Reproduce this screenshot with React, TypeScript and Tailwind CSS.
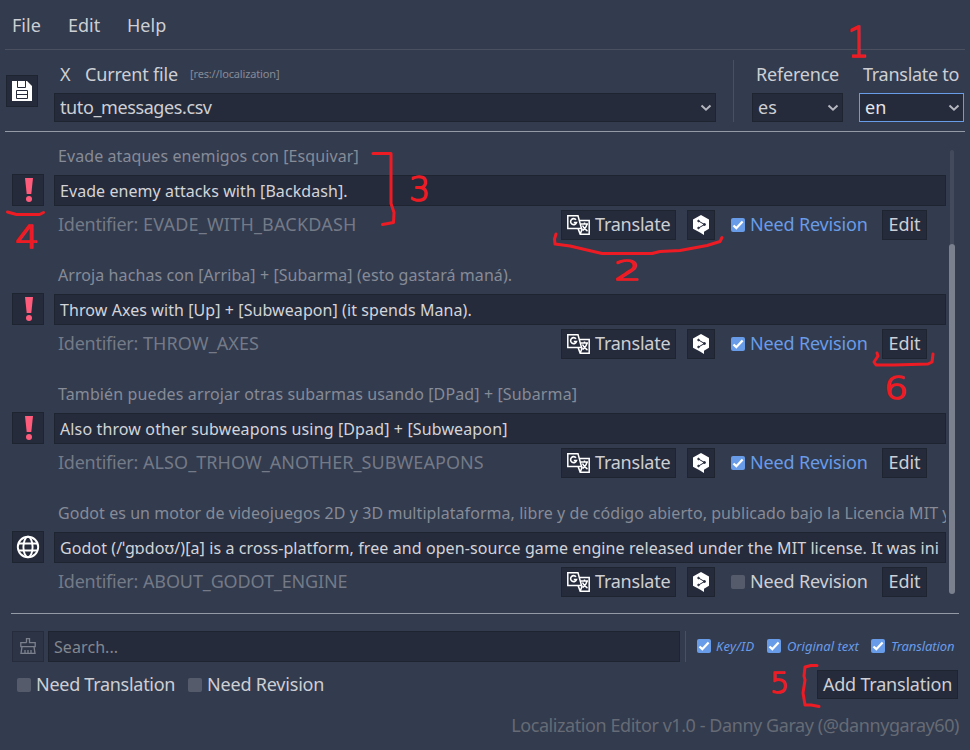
import React from "react";

const UI = "font-['Noto_Sans',sans-serif] text-[18px] leading-[24px] whitespace-nowrap";

function Chevron() {
  return (
    <svg width="12" height="8" viewBox="0 0 12 8" fill="none" className="shrink-0">
      <path d="M1.500 1.500 6 5.700l4.500-4.200" stroke="#b4b7bf" strokeWidth="2" />
    </svg>
  );
}

function Check({ on }: { on?: boolean }) {
  return on ? (
    <span className="flex h-[14px] w-[14px] shrink-0 items-center justify-center rounded-[2px] bg-[#699ce8]">
      <svg width="14" height="14" viewBox="0 0 14 14" fill="none">
        <path d="M2.500 7.500 5.300 10.200l6.300-6.700" stroke="#fff" strokeWidth="2.300" />
      </svg>
    </span>
  ) : (
    <span className="h-[14px] w-[14px] shrink-0 rounded-[2px] bg-[#555b6b]" />
  );
}

function SaveIcon() {
  return (
    <svg width="20" height="20" viewBox="0 0 20 20">
      <path d="M0 0h15l5 5v15H0z" fill="#fff" />
      <path d="M5.500 0v6.500h8V0M4.500 9.500h11v8h-11zM4.500 13.500h11" fill="none" stroke="#262b3b" strokeWidth="1" />
    </svg>
  );
}

function GlobeIcon() {
  return (
    <svg width="24" height="24" viewBox="0 0 24 24" fill="none" stroke="#fff" strokeWidth="1.900">
      <circle cx="12" cy="12" r="10.200" />
      <ellipse cx="12" cy="12" rx="4.600" ry="10.200" />
      <path d="M2.500 8.500h19M2.500 15.500h19" />
    </svg>
  );
}

function AlertIcon() {
  return (
    <svg width="8" height="24" viewBox="0 0 8 24" fill="#ff5c7c" className="ml-px">
      <path d="M0 0h8L6.300 16H1.700z" />
      <circle cx="4" cy="21" r="3" />
    </svg>
  );
}

function TranslateIcon() {
  return (
    <svg width="23" height="20" viewBox="0 0 23 20" fill="none" stroke="#fff" strokeWidth="1.500">
      <path d="M.8 .8H11l3.500 12.700H.8zM12.500 5.500h9.700v13.700h-9L11 13.500M11 13.500l2.300 5.500 2-5.500" />
      <path d="M9 4.800a3 3 0 1 0 .5 2.700H6.800" strokeWidth="1.600" />
      <path d="M14 9h7M17.500 7.500V9M20 9c-.5 3-2 5-4.500 6.500M15.500 10.500c1 2.500 2.500 4 5 5.500" />
    </svg>
  );
}

function DeeplIcon() {
  return (
    <svg width="16" height="20" viewBox="0 0 16 20" className="-mt-px">
      <path d="M8 0l8 4.500v9.300L11 16.800V20l-4-2.500-7-3.700V4.500z" fill="#fff" />
      <g fill="#262b3b" stroke="#262b3b" strokeWidth="1">
        <path d="M5.500 6l6 3.500-6 3.500" fill="none" />
        <circle cx="5.500" cy="6" r=".8" />
        <circle cx="11.500" cy="9.500" r="1" />
        <circle cx="5.500" cy="13" r=".8" />
      </g>
    </svg>
  );
}

function BrushIcon() {
  return (
    <svg width="16" height="16" viewBox="0 0 16 16" fill="none" stroke="#7b808c" strokeWidth="1.300" className="-mt-px">
      <path d="M6.500 4.700V.7h3v4h5.700v4H.8v-4h5.700M2 8.700l-1 6.600h14l-1-6.600M5 15v-3M8 15v-3M11 15v-3" />
    </svg>
  );
}

const box = "border border-[#1f2431] bg-[#262b3b]";

type Entry = {
  source: string;
  sourceTrack: string;
  text: string;
  textTrack: string;
  id: string;
  idTrack: string;
  revise: boolean;
};

const entries: Entry[] = [
  {
    source: "Evade ataques enemigos con [Esquivar]",
    sourceTrack: "tracking-[0.08px]",
    text: "Evade enemy attacks with [Backdash].",
    textTrack: "tracking-[0.07px]",
    id: "EVADE_WITH_BACKDASH",
    idTrack: "tracking-[0.2px]",
    revise: true,
  },
  {
    source: "Arroja hachas con [Arriba] + [Subarma] (esto gastará maná).",
    sourceTrack: "tracking-[0.08px]",
    text: "Throw Axes with [Up] + [Subweapon] (it spends Mana).",
    textTrack: "tracking-[0.08px]",
    id: "THROW_AXES",
    idTrack: "tracking-[0.1px]",
    revise: true,
  },
  {
    source: "También puedes arrojar otras subarmas usando [DPad] + [Subarma]",
    sourceTrack: "tracking-[0.12px]",
    text: "Also throw other subweapons using [Dpad] + [Subweapon]",
    textTrack: "tracking-[0.13px]",
    id: "ALSO_TRHOW_ANOTHER_SUBWEAPONS",
    idTrack: "tracking-[0.07px]",
    revise: true,
  },
  {
    source:
      "Godot es un motor de videojuegos 2D y 3D multiplataforma, libre y de código abierto, publicado bajo la Licencia MIT y",
    sourceTrack: "tracking-[0.06px]",
    text: "Godot (/ˈɡɒdoʊ/)[a] is a cross-platform, free and open-source game engine released under the MIT license. It was ini",
    textTrack: "tracking-[0.09px]",
    id: "ABOUT_GODOT_ENGINE",
    idTrack: "tracking-[-0.13px]",
    revise: false,
  },
];

function Row({ e }: { e: Entry }) {
  return (
    <div className="flex h-[119px] shrink-0">
      <div className={`mt-[30px] flex h-8 w-8 shrink-0 items-center justify-center ${box}`}>
        {e.revise ? <AlertIcon /> : <GlobeIcon />}
      </div>
      <div className="ml-[10px] w-[892px]">
        <div className={`h-[31px] overflow-hidden pl-1 font-['Noto_Sans',sans-serif] text-[16px] leading-[24px] whitespace-nowrap text-[#868b97] ${e.sourceTrack}`}>
          {e.source}
        </div>
        <div className={`flex h-[31px] items-center overflow-hidden px-[5px] font-['Noto_Sans',sans-serif] text-[16px] whitespace-nowrap text-[#d2d4d9] ${e.textTrack} ${box}`}>
          {e.text}
        </div>
        <div className={`mt-1 flex h-[30px] items-center ${UI}`}>
          <div className="flex w-[507px] pb-[2px] pl-1 text-[#747a87]">
            <span className="w-[85px] tracking-[-0.25px]">Identifier:</span>
            <span className={e.idTrack}>{e.id}</span>
          </div>
          <div className={`flex h-[30px] w-[115px] shrink-0 items-center gap-[5px] pl-[5px] text-[#cdcfd4] ${box}`}>
            <TranslateIcon />
            <span className="pb-[2px] tracking-[-0.22px]">Translate</span>
          </div>
          <div className={`ml-[11px] flex h-[30px] w-7 shrink-0 items-center justify-center ${box}`}>
            <DeeplIcon />
          </div>
          <div className="ml-4 flex w-[151px] shrink-0 items-center gap-[5px]">
            <Check on={e.revise} />
            <span className={`pb-[2px] tracking-[-0.16px] ${e.revise ? "text-[#699ce8]" : "text-[#cdcfd4]"}`}>Need Revision</span>
          </div>
          <div className={`flex h-[30px] w-[45px] shrink-0 items-center justify-center pb-[2px] text-[#cdcfd4] ${box}`}>Edit</div>
        </div>
      </div>
    </div>
  );
}

/* Red pen notes laid over the window */
function Notes() {
  return (
    <svg className="pointer-events-none absolute top-0 left-0" width="970" height="750" fill="none" stroke="#ed1c24" strokeWidth="3" strokeLinecap="round" strokeLinejoin="round">
      <path d="M373 153.500h18v50l3 9-.5 10-11 2" />
      <path d="M7.500 212l9 2.500h23l4-2" />
      <path d="M556 234l-1.500 5 .5 5 15 2 17 4 15 3.500h50l8-2 20-1 27-5 13-4 2-4" />
      <path d="M877 353l1 3-4 6 2 3h18l34-1 4-2 1-8" />
      <path d="M817 665.500h-6l-6 1.500-1 9 1 4-2 13 2 12h6l8 1.500" />
      <g fill="#ed1c24" strokeWidth="1.600" className="font-['DejaVu_Sans',sans-serif] font-extralight">
        <text x="847" y="57" fontSize="42" textLength="22" lengthAdjust="spacingAndGlyphs">1</text>
        <text x="614" y="280" fontSize="27" textLength="27" lengthAdjust="spacingAndGlyphs">2</text>
        <text x="409" y="201" fontSize="34" textLength="21" lengthAdjust="spacingAndGlyphs">3</text>
        <text x="15" y="248" fontSize="32" textLength="24" lengthAdjust="spacingAndGlyphs">4</text>
        <text x="770" y="693" fontSize="29" textLength="19" lengthAdjust="spacingAndGlyphs">5</text>
        <text x="884" y="399" fontSize="32" textLength="24" lengthAdjust="spacingAndGlyphs">6</text>
      </g>
    </svg>
  );
}

export default function App() {
  return (
    <div className={`relative flex h-[750px] w-[970px] flex-col overflow-hidden bg-[#333b4e] text-[#cdcfd4] ${UI}`}>
      <nav className="flex h-[49px] shrink-0 items-center pt-px pl-3">
        <span className="w-14">File</span>
        <span className="w-[59px]">Edit</span>
        <span>Help</span>
      </nav>
      <div className="mx-[5px] h-px shrink-0 bg-[#4a5060]" />

      <header className="flex h-[81px] shrink-0 pl-[6px]">
        <div className={`mt-[25px] flex h-8 w-8 items-center justify-center ${box}`}>
          <SaveIcon />
        </div>
        <div className="ml-4 w-[662px] pt-[12px]">
          <div className="flex h-[31px] items-start pl-[6px]">
            <span className="w-[25px]">X</span>
            <span className="w-[105px] tracking-[-0.18px]">Current file</span>
            <span className="text-[11px] tracking-[-0.15px] text-[#868b97]">[res://localization]</span>
          </div>
          <div className={`flex h-[29px] items-center justify-between pr-[3px] pl-[5px] ${box}`}>
            <span className="pb-[2px] tracking-[-0.4px]">tuto_messages.csv</span>
            <Chevron />
          </div>
        </div>
        <div className="mt-[10px] ml-[17px] h-[62px] w-px bg-[#4a5060]" />
        <div className="ml-[18px] w-[91px] pt-[12px]">
          <div className="h-[31px] pl-1 tracking-[-0.2px]">Reference</div>
          <div className={`flex h-[29px] items-center justify-between pr-[3px] pl-[5px] ${box}`}>
            <span className="pb-[2px]">es</span>
            <Chevron />
          </div>
        </div>
        <div className="ml-4 w-[105px] pt-[12px]">
          <div className="h-[31px] pl-1 tracking-[-0.28px]">Translate to</div>
          <div className="flex h-[29px] items-center justify-between border border-[#699ce8] bg-[#262b3b] pr-[3px] pl-[5px]">
            <span className="pb-[2px] text-[#e4e6ea]">en</span>
            <Chevron />
          </div>
        </div>
      </header>
      <div className="mx-[5px] h-px shrink-0 bg-[#949ba6]" />

      <main className="flex h-[481px] shrink-0 pt-3 pl-3">
        <div className="flex h-[469px] w-[934px] flex-col overflow-hidden">
          {entries.map((e) => (
            <Row key={e.id} e={e} />
          ))}
        </div>
        <div className="mt-[6px] ml-[3px] flex h-[444px] w-[6px] flex-col items-center">
          <div className="h-[94px] w-1 rounded-t-full bg-[#434a5b]" />
          <div className="h-[350px] w-[6px] rounded-full bg-[#7a808e]" />
        </div>
      </main>
      <div className="mr-[11px] ml-[11px] h-px shrink-0 bg-[#949ba6]" />

      <section className="mt-[17px] flex h-[31px] shrink-0 pl-3">
        <div className="flex h-[31px] w-8 items-center justify-center border border-[#262c3b] bg-[#2d3446]">
          <BrushIcon />
        </div>
        <div className={`ml-1 flex w-[632px] items-center pl-[5px] text-[#83878f] ${box}`}>
          <span className="text-[16px] tracking-[0.08px]">Search...</span>
        </div>
        <div className="ml-[5px] h-[31px] w-px bg-[#4a5060]" />
        <div className="ml-[11px] flex h-[30px] items-center text-[13px] text-[#699ce8] italic">
          <Check on />
          <span className="ml-[5px] w-[51px] tracking-[0.2px]">Key/ID</span>
          <Check on />
          <span className="ml-[6px] w-[84px]">Original text</span>
          <Check on />
          <span className="ml-[6px] tracking-[-0.1px]">Translation</span>
        </div>
      </section>
      <section className="mt-2 flex h-[29px] shrink-0 items-center pl-[17px]">
        <Check />
        <span className="ml-[5px] w-[152px] pb-px tracking-[-0.28px]">Need Translation</span>
        <Check />
        <span className="ml-[5px] w-[610px] pb-px tracking-[-0.2px]">Need Revision</span>
        <div className={`flex h-[29px] w-[141px] shrink-0 items-center justify-center pb-px tracking-[-0.2px] ${box}`}>Add Translation</div>
      </section>
      <footer className="mt-[14px] pr-[11px] text-right tracking-[-0.43px] text-[#666b75]">
        Localization Editor v1.0 - Danny Garay (@dannygaray60)
      </footer>
      <Notes />
    </div>
  );
}
